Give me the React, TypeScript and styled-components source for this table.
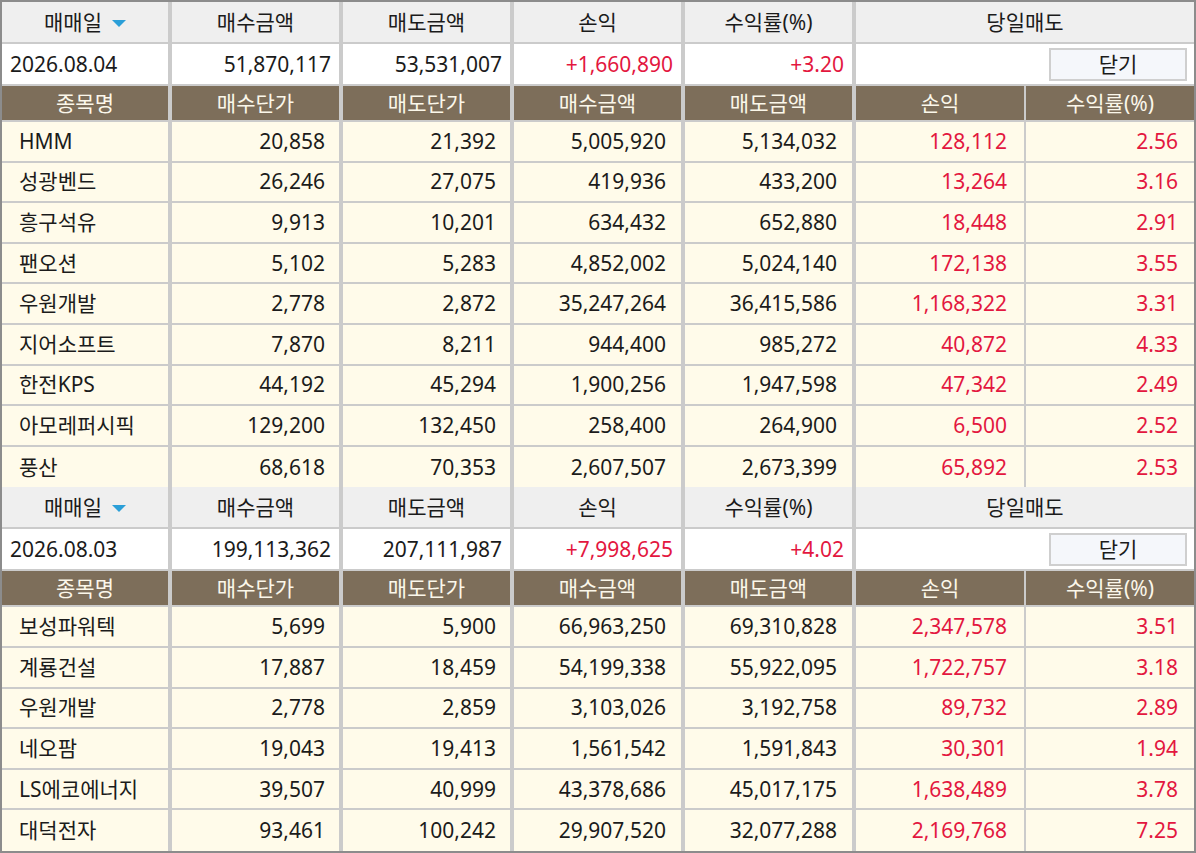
import React from "react";
import styled, { createGlobalStyle } from "styled-components";

const GlobalStyle = createGlobalStyle`
  html, body { margin: 0; padding: 0; background: #ffffff; }
  body { font-family: "Noto Sans", "Noto Sans CJK KR", sans-serif; }
  * { box-sizing: border-box; }
`;

const SEP = "#cbcbcb";
const RED = "#e3173f";

const Frame = styled.div`
  width: 1196px;
  height: 853px;
  border: 2px solid #8c8c8c;
  overflow: hidden;
  font-family: "Noto Sans", "Noto Sans CJK KR", sans-serif;
  font-size: 21px;
  color: #1b1b1b;
`;

const Section = styled.div`
  display: flex;
  flex-direction: column;
`;

const Row = styled.div<{ $h: number; $bg: string; $sep?: boolean }>`
  display: grid;
  grid-template-columns: 166px 171px 171px 171px 171px 172px 170px;
  height: ${(p) => p.$h + (p.$sep === false ? 0 : 2)}px;
  background: ${(p) => p.$bg};
  border-bottom: ${(p) => (p.$sep === false ? "none" : `2px solid ${SEP}`)};
`;

const Cell = styled.div<{
  $align?: "left" | "right" | "center";
  $pad?: number;
  $span?: number;
  $thin?: boolean;
  $first?: boolean;
  $color?: string;
}>`
  display: flex;
  align-items: center;
  justify-content: ${(p) =>
    p.$align === "left" ? "flex-start" : p.$align === "right" ? "flex-end" : "center"};
  padding: 0 ${(p) => (p.$align === "right" ? p.$pad ?? 0 : 0)}px 0
    ${(p) => (p.$align === "left" ? p.$pad ?? 0 : 0)}px;
  grid-column: span ${(p) => p.$span ?? 1};
  border-left: ${(p) => (p.$first ? "none" : `${p.$thin ? 2 : 4}px solid ${SEP}`)};
  color: ${(p) => p.$color ?? "inherit"};
  white-space: nowrap;
  line-height: 1;
`;

const BrownCell = styled(Cell)`
  color: #fbf7ea;
`;

const SortArrow = styled.span`
  display: inline-block;
  width: 0;
  height: 0;
  margin-left: 10px;
  margin-top: 2px;
  border-left: 7px solid transparent;
  border-right: 7px solid transparent;
  border-top: 7px solid #2b9fd8;
`;

const CloseButton = styled.button`
  width: 138px;
  height: 33px;
  border: 2px solid #cfcfcf;
  background: #f5f7fb;
  font-family: "Noto Sans", "Noto Sans CJK KR", sans-serif;
  font-size: 21px;
  color: #1b1b1b;
  padding: 0;
  line-height: 1;
  cursor: pointer;
`;

type Item = [string, string, string, string, string, string, string];

interface Block {
  date: string;
  buy: string;
  sell: string;
  pnl: string;
  rate: string;
  items: Item[];
}

const blocks: Block[] = [
  {
    date: "2026.08.04",
    buy: "51,870,117",
    sell: "53,531,007",
    pnl: "+1,660,890",
    rate: "+3.20",
    items: [
      ["HMM", "20,858", "21,392", "5,005,920", "5,134,032", "128,112", "2.56"],
      ["성광벤드", "26,246", "27,075", "419,936", "433,200", "13,264", "3.16"],
      ["흥구석유", "9,913", "10,201", "634,432", "652,880", "18,448", "2.91"],
      ["팬오션", "5,102", "5,283", "4,852,002", "5,024,140", "172,138", "3.55"],
      ["우원개발", "2,778", "2,872", "35,247,264", "36,415,586", "1,168,322", "3.31"],
      ["지어소프트", "7,870", "8,211", "944,400", "985,272", "40,872", "4.33"],
      ["한전KPS", "44,192", "45,294", "1,900,256", "1,947,598", "47,342", "2.49"],
      ["아모레퍼시픽", "129,200", "132,450", "258,400", "264,900", "6,500", "2.52"],
      ["풍산", "68,618", "70,353", "2,607,507", "2,673,399", "65,892", "2.53"],
    ],
  },
  {
    date: "2026.08.03",
    buy: "199,113,362",
    sell: "207,111,987",
    pnl: "+7,998,625",
    rate: "+4.02",
    items: [
      ["보성파워텍", "5,699", "5,900", "66,963,250", "69,310,828", "2,347,578", "3.51"],
      ["계룡건설", "17,887", "18,459", "54,199,338", "55,922,095", "1,722,757", "3.18"],
      ["우원개발", "2,778", "2,859", "3,103,026", "3,192,758", "89,732", "2.89"],
      ["네오팜", "19,043", "19,413", "1,561,542", "1,591,843", "30,301", "1.94"],
      ["LS에코에너지", "39,507", "40,999", "43,378,686", "45,017,175", "1,638,489", "3.78"],
      ["대덕전자", "93,461", "100,242", "29,907,520", "32,077,288", "2,169,768", "7.25"],
    ],
  },
];

const detailHeads = ["종목명", "매수단가", "매도단가", "매수금액", "매도금액", "손익", "수익률(%)"];

function DayBlock({ b }: { b: Block }) {
  return (
    <Section>
      <Row $h={40} $bg="#efefef">
        <Cell $first>
          매매일
          <SortArrow />
        </Cell>
        <Cell>매수금액</Cell>
        <Cell>매도금액</Cell>
        <Cell>손익</Cell>
        <Cell>수익률(%)</Cell>
        <Cell $span={2}>당일매도</Cell>
      </Row>
      <Row $h={40} $bg="#ffffff">
        <Cell $first $align="left" $pad={8}>
          {b.date}
        </Cell>
        <Cell $align="right" $pad={8}>{b.buy}</Cell>
        <Cell $align="right" $pad={8}>{b.sell}</Cell>
        <Cell $align="right" $pad={8} $color={RED}>{b.pnl}</Cell>
        <Cell $align="right" $pad={8} $color={RED}>{b.rate}</Cell>
        <Cell $span={2} $align="right" $pad={7}>
          <CloseButton>닫기</CloseButton>
        </Cell>
      </Row>
      <Row $h={34} $bg="#7d6e5a">
        {detailHeads.map((h, i) => (
          <BrownCell key={h} $first={i === 0} $thin={i === 6}>
            {h}
          </BrownCell>
        ))}
      </Row>
      {b.items.map((it, idx) => {
        const last = idx === b.items.length - 1;
        return (
          <Row key={it[0] + idx} $h={last ? 40.6 : 38.6} $sep={!last} $bg="#fffbea">
            <Cell $first $align="left" $pad={17}>{it[0]}</Cell>
            <Cell $align="right" $pad={14}>{it[1]}</Cell>
            <Cell $align="right" $pad={14}>{it[2]}</Cell>
            <Cell $align="right" $pad={15}>{it[3]}</Cell>
            <Cell $align="right" $pad={15}>{it[4]}</Cell>
            <Cell $align="right" $pad={17} $color={RED}>{it[5]}</Cell>
            <Cell $align="right" $pad={16} $thin $color={RED}>{it[6]}</Cell>
          </Row>
        );
      })}
    </Section>
  );
}

export default function App() {
  return (
    <>
      <GlobalStyle />
      <Frame>
        {blocks.map((b) => (
          <DayBlock key={b.date} b={b} />
        ))}
      </Frame>
    </>
  );
}
